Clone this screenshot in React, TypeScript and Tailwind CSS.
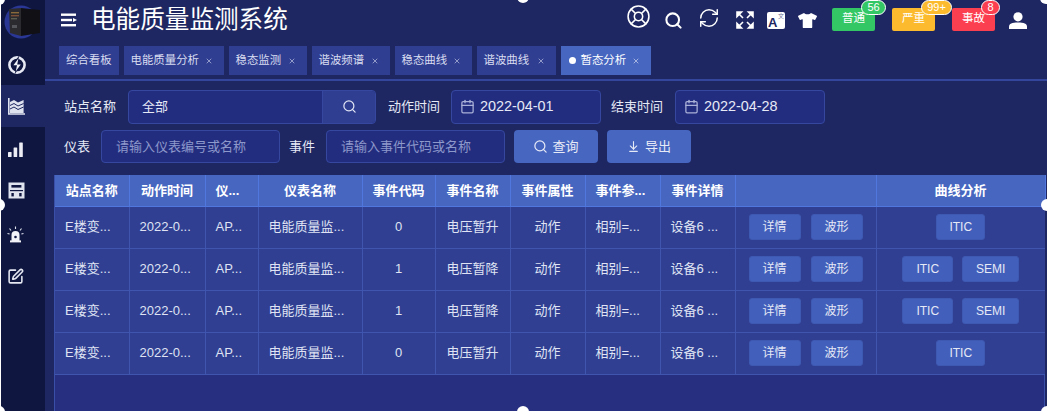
import React from "react";
import { LifeBuoy, Search, RefreshCw, Calendar, ArrowDownToLine, X, SquarePen } from "lucide-react";
import { FaTshirt } from "react-icons/fa";

type Row = {
  code: number;
  name: string;
  curves: string[];
};

const columns = [
  { title: "站点名称", width: "w-[74px]", align: "text-center" },
  { title: "动作时间", width: "w-[76px]", align: "text-center" },
  { title: "仪...", width: "w-[53px]", align: "pl-[10px] text-left" },
  { title: "仪表名称", width: "w-[104px]", align: "text-center" },
  { title: "事件代码", width: "w-[73px]", align: "text-center" },
  { title: "事件名称", width: "w-[75px]", align: "text-center" },
  { title: "事件属性", width: "w-[75px]", align: "text-center" },
  { title: "事件参...", width: "w-[75px]", align: "pl-[10px] text-left" },
  { title: "事件详情", width: "w-[75px]", align: "text-center" },
  { title: "", width: "w-[141px]", align: "text-center" },
  { title: "曲线分析", width: "w-[169px]", align: "text-center" },
];

const rows: Row[] = [
  { code: 0, name: "电压暂升", curves: ["ITIC"] },
  { code: 1, name: "电压暂降", curves: ["ITIC", "SEMI"] },
  { code: 1, name: "电压暂降", curves: ["ITIC", "SEMI"] },
  { code: 0, name: "电压暂升", curves: ["ITIC"] },
];

const tabs = [
  { title: "电能质量分析", width: "w-[100px]" },
  { title: "稳态监测", width: "w-[78px]" },
  { title: "谐波频谱", width: "w-[78px]" },
  { title: "稳态曲线", width: "w-[77px]" },
  { title: "谐波曲线", width: "w-[79px]" },
];

const Logo = () => (
  <svg width="38" height="34" viewBox="0 0 38 34">
    <circle cx="17" cy="17" r="16.5" fill="#2a3795" />
    <path d="M5 4 L17 3 L17 31 L6 28 Z" fill="#2b2b2f" />
    <path d="M17 3 L36 5 L36 28 L17 31 Z" fill="#111115" />
    <rect x="7" y="7" width="8" height="1.4" fill="#8a6a3a" />
    <rect x="7" y="10" width="8" height="1.4" fill="#7a4f3a" />
    <rect x="7" y="13" width="6" height="1.4" fill="#5d5d50" />
    <rect x="8" y="20" width="5" height="3" fill="#55555c" />
  </svg>
);

const BoltIcon = () => (
  <svg width="20" height="20" viewBox="0 0 20 20">
    <circle cx="10" cy="10" r="7.6" fill="none" stroke="#e6e8f2" strokeWidth="2.6" />
    <path d="M12 0.8 L4.5 11 H9 L7.8 19 L15.5 8.6 H11 Z" fill="#0f1740" />
    <path d="M11.4 3.6 L6.4 10.2 H10 L8.8 16.2 L13.8 9.4 H10.2 Z" fill="#f2f3f8" />
  </svg>
);

const AreaIcon = () => (
  <svg width="17" height="17" viewBox="0 0 17 17">
    <path d="M0.8 0 V16 H17" fill="none" stroke="#dfe3f0" strokeWidth="1.6" />
    <path d="M2 4 L6 2 L10 4.5 L15.6 2 V15 H2 Z" fill="#dfe3f0" />
    <path d="M2 7.5 L6 5.5 L10 8 L15.6 5.5 M2 11 L6 9 L10 11.5 L15.6 9" fill="none" stroke="#1e2761" strokeWidth="1" />
  </svg>
);

const BarsIcon = () => (
  <svg width="15" height="15" viewBox="0 0 15 15" fill="#ececf4">
    <rect x="0" y="10" width="3.6" height="5" rx="0.6" />
    <rect x="5.6" y="5.5" width="3.6" height="9.5" rx="0.6" />
    <rect x="11.2" y="0.5" width="3.6" height="14.5" rx="0.6" />
  </svg>
);

const FormIcon = () => (
  <svg width="17" height="17" viewBox="0 0 17 17">
    <rect x="0.5" y="0.5" width="16" height="16" fill="#dfe3ee" />
    <rect x="3.4" y="3" width="10" height="2.6" fill="#0f1740" />
    <rect x="2" y="8" width="13" height="1.2" fill="#0f1740" />
    <rect x="3.4" y="11" width="2.4" height="3.4" fill="#0f1740" />
    <rect x="11.2" y="11" width="2.4" height="3.4" fill="#0f1740" />
  </svg>
);

const AlarmIcon = () => (
  <svg width="17" height="17" viewBox="0 0 17 17">
    <path d="M4.5 15 V9 a4 4 0 0 1 8 0 V15 Z" fill="#f2f3f8" />
    <rect x="3" y="14.4" width="11" height="2" fill="#f2f3f8" />
    <circle cx="8.5" cy="11" r="1.3" fill="#0f1740" />
    <path d="M8.5 0.5 V3 M2.5 2.5 L4 4.5 M14.5 2.5 L13 4.5 M0.5 7.5 L2.6 8 M16.5 7.5 L14.4 8" stroke="#dfe3ee" strokeWidth="1.1" />
  </svg>
);

const ExpandIcon = () => (
  <svg width="18" height="18" viewBox="0 0 18 18" fill="none" stroke="#fff" strokeWidth="1.6">
    <path d="M1 5.5 V1 H5.5 Z" fill="#fff" />
    <path d="M17 5.5 V1 H12.5 Z" fill="#fff" />
    <path d="M1 12.5 V17 H5.5 Z" fill="#fff" />
    <path d="M17 12.5 V17 H12.5 Z" fill="#fff" />
    <path d="M2.5 2.5 L7 7 M15.5 2.5 L11 7 M2.5 15.5 L7 11 M15.5 15.5 L11 11" />
  </svg>
);

const UserIcon = () => (
  <svg width="18" height="17" viewBox="0 0 18 17" fill="#fff">
    <circle cx="9" cy="4.8" r="4.6" />
    <path d="M0 17 V14.5 C0 11.8 3 10.4 9 10.4 C15 10.4 18 11.8 18 14.5 V17 Z" />
  </svg>
);

const TranslateIcon = () => (
  <div className="relative h-[17px] w-[18px] rounded-[2px] bg-white">
    <span className="absolute bottom-[-1px] left-[1px] text-[13px] font-bold leading-[14px] text-[#1e2761]">A</span>
    <span className="absolute right-[1px] top-[1px] text-[6px] leading-[7px] text-[#6b7396]">文</span>
  </div>
);

const Handle = ({ className }: { className: string }) => (
  <div className={`absolute h-[12px] w-[12px] rounded-full bg-white ${className}`} />
);

const Chip = ({ label, count, color, badgeWidth }: { label: string; count: string; color: string; badgeWidth: string }) => (
  <div className={`relative flex h-[23px] w-[43px] items-center justify-center rounded-[2px] text-[11.5px] text-white ${color}`}>
    {label}
    <span className={`absolute left-[29px] top-[-8px] flex h-[15px] items-center justify-center rounded-full border border-white text-[11px] leading-none ${color} ${badgeWidth}`}>
      {count}
    </span>
  </div>
);

const FieldLabel = ({ text, width }: { text: string; width: string }) => (
  <span className={`shrink-0 text-[13px] text-[#e6e9f6] ${width}`}>{text}</span>
);

const TextInput = ({ placeholder }: { placeholder: string }) => (
  <div className="flex h-full w-[179px] items-center rounded-[4px] border border-[#35479f] bg-[#232d7f] pl-[14px] text-[13px] text-[#8d98cb]">
    {placeholder}
  </div>
);

const DateInput = ({ value }: { value: string }) => (
  <div className="flex h-full w-[150px] items-center rounded-[4px] border border-[#35479f] bg-[#232d7f] pl-[8px] text-[14.4px] text-[#e6e9f6]">
    <Calendar size={15} className="mr-[5px] text-[#a9b1d8]" />
    {value}
  </div>
);

const ActionButton = ({ label, width }: { label: string; width: string }) => (
  <button className={`flex h-[26px] items-center justify-center rounded-[3px] border border-[#3e59b2] bg-[#4260bb] text-[12px] text-[#e6e9f6] ${width}`}>
    {label}
  </button>
);

export default function App() {
  return (
    <div
      className="relative flex h-[411px] w-[1047px] overflow-hidden bg-[#1e2761] text-white"
      style={{ fontFamily: '"Liberation Sans", "Noto Sans CJK SC", sans-serif' }}
    >
      {/* sidebar */}
      <aside className="flex w-[45px] shrink-0 flex-col border-l border-white bg-[#0f1740]">
        <div className="flex h-[43px] items-center pl-[3px]">
          <Logo />
        </div>
        <div className="flex h-[42px] items-center pl-[6px] pt-[2px]"><BoltIcon /></div>
        <div className="flex h-[42px] items-center bg-[#1e2761] pl-[7px] pt-[1px]"><AreaIcon /></div>
        <div className="flex h-[42px] items-center pl-[7px] pt-[2px]"><BarsIcon /></div>
        <div className="flex h-[43px] items-center pl-[7px]"><FormIcon /></div>
        <div className="flex h-[42px] items-center pl-[6px] pt-[2px]"><AlarmIcon /></div>
        <div className="flex h-[42px] items-center pl-[6px] pt-[2px]">
          <SquarePen size={17} strokeWidth={2.2} className="text-[#e6e8f2]" />
        </div>
      </aside>

      <main className="flex min-w-0 flex-1 flex-col">
        {/* top bar */}
        <header className="flex h-[40px] shrink-0 items-center pl-[16px] pr-[20px]">
          <svg width="16" height="14" viewBox="0 0 16 14" fill="#fff">
            <rect x="0" y="0.5" width="15" height="2.4" />
            <rect x="0" y="5.8" width="11" height="2.4" />
            <rect x="0" y="11" width="15" height="2.4" />
            <path d="M12 5 L16 7 L12 9 Z" />
          </svg>
          <h1 className="ml-[14px] text-[24.6px] font-normal leading-none">电能质量监测系统</h1>
          <div className="ml-auto flex items-center gap-[13px]">
            <LifeBuoy size={25} strokeWidth={1.5} className="mb-[7px]" />
            <Search size={19} strokeWidth={2.6} className="mr-[2px]" />
            <RefreshCw size={22} strokeWidth={1.6} className="mb-[5px]" />
            <div className="ml-[3px]"><ExpandIcon /></div>
            <TranslateIcon />
            <FaTshirt size={19} />
          </div>
          <div className="mb-[2px] ml-[15px] flex gap-[17px]">
            <Chip label="普通" count="56" color="bg-[#33c766]" badgeWidth="w-[25px]" />
            <Chip label="严重" count="99+" color="bg-[#fcbb2e]" badgeWidth="w-[31px]" />
            <Chip label="事故" count="8" color="bg-[#fc3f50]" badgeWidth="w-[19px]" />
          </div>
          <div className="ml-[14px]"><UserIcon /></div>
        </header>

        {/* tabs */}
        <nav className="flex h-[41px] shrink-0 gap-[5px] border-b-2 border-[#33469c] pl-[14px] pt-[6px] text-[11.4px] text-[#d8dcf0]">
          <div className="flex h-[29px] items-center bg-[#2f3e91] px-[7px]">综合看板</div>
          {tabs.map((tab) => (
            <div key={tab.title} className={`flex h-[29px] items-center bg-[#2f3e91] pl-[7px] pr-[11px] ${tab.width}`}>
              {tab.title}
              <X size={8} strokeWidth={2} className="ml-auto text-[#c4cae6]" />
            </div>
          ))}
          <div className="flex h-[29px] w-[90px] items-center bg-[#4666c0] pl-[8px] pr-[11px] text-white">
            <span className="mr-[5px] h-[7px] w-[7px] rounded-full bg-white" />
            暂态分析
            <X size={8} strokeWidth={2} className="ml-auto text-[#d5daf0]" />
          </div>
        </nav>

        {/* filters */}
        <section className="flex shrink-0 flex-col gap-[6px] pl-[19px] pt-[9px]">
          <div className="flex h-[33.5px] items-center">
            <FieldLabel text="站点名称" width="w-[53px]" />
            <div className="ml-[11px] flex h-full w-[248px] overflow-hidden rounded-[4px] border border-[#35479f] bg-[#232d7f] text-[13px] text-[#e6e9f6]">
              <div className="flex flex-1 items-center pl-[13px]">全部</div>
              <div className="flex w-[53px] items-center justify-center border-l border-[#35479f] bg-[#2f3e91]">
                <Search size={15} className="text-[#dfe3f3]" />
              </div>
            </div>
            <FieldLabel text="动作时间" width="ml-[12px] w-[52px]" />
            <div className="ml-[11px] h-full"><DateInput value="2022-04-01" /></div>
            <FieldLabel text="结束时间" width="ml-[10px] w-[53px]" />
            <div className="ml-[11px] h-full"><DateInput value="2022-04-28" /></div>
          </div>
          <div className="flex h-[33.5px] items-center">
            <FieldLabel text="仪表" width="w-[26px]" />
            <div className="ml-[11px] h-full"><TextInput placeholder="请输入仪表编号或名称" /></div>
            <FieldLabel text="事件" width="ml-[9px] w-[26px]" />
            <div className="ml-[11px] h-full"><TextInput placeholder="请输入事件代码或名称" /></div>
            <button className="ml-[9px] flex h-full w-[84px] items-center justify-center gap-[4px] rounded-[4px] bg-[#4666c0] text-[13px] text-[#e6e9f6]">
              <Search size={15} />
              查询
            </button>
            <button className="ml-[9px] flex h-full w-[84px] items-center justify-center gap-[5px] rounded-[4px] bg-[#4666c0] text-[13px] text-[#e6e9f6]">
              <ArrowDownToLine size={13} />
              导出
            </button>
          </div>
        </section>

        {/* table */}
        <section className="ml-[9px] mr-[2px] mt-[12px] flex-1 border-x border-[#3a4fa8] bg-[#262f80]">
          <table className="w-full table-fixed border-collapse text-[13px]">
            <colgroup>
              {columns.map((col, i) => (
                <col key={i} className={col.width} />
              ))}
            </colgroup>
            <thead>
              <tr className="h-[31px] border-b border-[#4f77dd] bg-[#4666c0] text-white">
                {columns.map((col, i) => (
                  <th key={i} className={`border-r border-[#4f77dd] font-bold ${col.align}`}>
                    {col.title}
                  </th>
                ))}
              </tr>
            </thead>
            <tbody className="text-[#dfe3f3]">
              {rows.map((row, i) => (
                <tr key={i} className="h-[42px] border-b border-[#3f55ae] bg-[#313f92]">
                  <td className="border-r border-[#3f55ae] px-[10px]">E楼变...</td>
                  <td className="border-r border-[#3f55ae] px-[10px]">2022-0...</td>
                  <td className="border-r border-[#3f55ae] px-[10px]">AP...</td>
                  <td className="border-r border-[#3f55ae] px-[10px]">电能质量监...</td>
                  <td className="border-r border-[#3f55ae] px-[10px] text-center">{row.code}</td>
                  <td className="border-r border-[#3f55ae] px-[10px] text-center">{row.name}</td>
                  <td className="border-r border-[#3f55ae] px-[10px] text-center">动作</td>
                  <td className="border-r border-[#3f55ae] px-[10px]">相别=...</td>
                  <td className="border-r border-[#3f55ae] px-[10px]">设备6 ...</td>
                  <td className="border-r border-[#3f55ae]">
                    <div className="flex justify-center gap-[10px]">
                      <ActionButton label="详情" width="w-[52px]" />
                      <ActionButton label="波形" width="w-[52px]" />
                    </div>
                  </td>
                  <td>
                    <div className="flex justify-center gap-[9px]">
                      {row.curves.map((curve) => (
                        <ActionButton
                          key={curve}
                          label={curve}
                          width={curve === "SEMI" ? "w-[57px]" : row.curves.length > 1 ? "w-[51px]" : "w-[49px]"}
                        />
                      ))}
                    </div>
                  </td>
                </tr>
              ))}
            </tbody>
          </table>
        </section>
      </main>

      {/* selection handles lying over the screenshot */}
      <Handle className="left-[-7px] top-[-7px]" />
      <Handle className="left-[517px] top-[-9px]" />
      <Handle className="left-[1040px] top-[-8px]" />
      <Handle className="left-[-7px] top-[199px]" />
      <Handle className="left-[1041px] top-[199px]" />
      <Handle className="left-[-7px] top-[406px]" />
      <Handle className="left-[517px] top-[406px]" />
      <Handle className="left-[1041px] top-[406px]" />
    </div>
  );
}
